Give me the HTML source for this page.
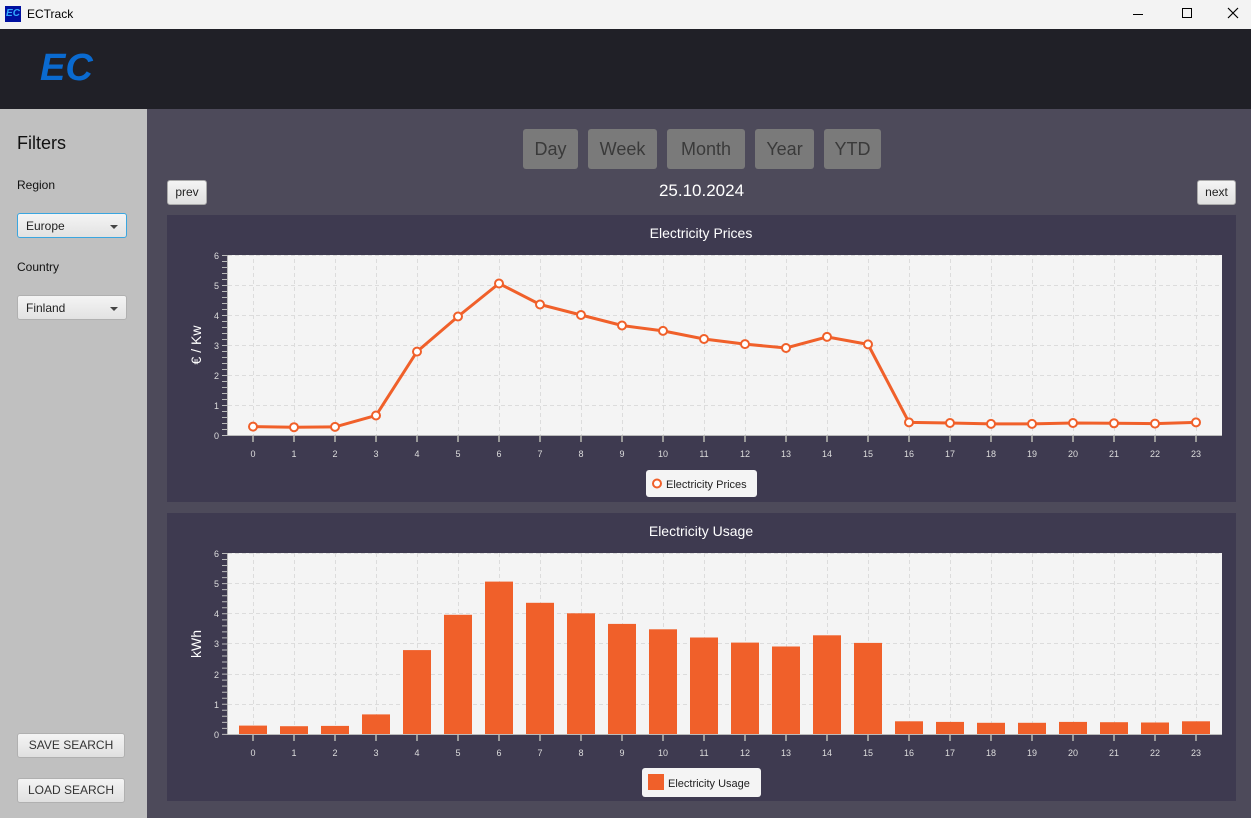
<!DOCTYPE html>
<html><head><meta charset="utf-8"><style>
*{margin:0;padding:0;box-sizing:border-box}
body{width:1251px;height:818px;overflow:hidden;position:relative;font-family:"Liberation Sans","DejaVu Sans",sans-serif;background:#4d4a5a}
.a{position:absolute}
.tb{left:0;top:0;width:1251px;height:29px;background:#f3f3f3}
.hd{left:0;top:29px;width:1251px;height:80px;background:#202027}
.sb{left:0;top:109px;width:147px;height:709px;background:#c0c0c0}
.sel{width:110px;height:25px;border-radius:3px;background:linear-gradient(#f4f4f4,#e2e2e2);border:1px solid #b0b0b0;font-size:12px;color:#222;padding:5px 8px}
.sel:after{content:"";position:absolute;right:8px;top:11px;border:4px solid transparent;border-top:4px solid #444;border-bottom:0}
.btn{width:108px;height:25px;background:linear-gradient(#f4f4f4,#e0e0e0);border:1px solid #b0b0b0;border-radius:3px;font-size:12px;color:#333;text-align:center;line-height:23px}
.tab{top:129px;height:40px;background:#7a7a7a;border-radius:3px;color:#3a3a3a;font-size:18px;text-align:center;line-height:40px}
.sm{height:25px;background:linear-gradient(#f4f4f4,#e0e0e0);border:1px solid #aaa;border-radius:3px;font-size:12px;color:#222;text-align:center;line-height:23px}
.pn{background:#3e3a50;left:167px;width:1069px}
</style></head><body>
<div class="a tb"></div>
<div class="a" style="left:5px;top:6px;width:16px;height:16px;background:#0010a0;color:#3af;font:bold italic 10px 'Liberation Sans';line-height:16px;text-align:center">EC</div>
<div class="a" style="left:27px;top:7px;font-size:12px;color:#000">ECTrack</div>
<div class="a" style="left:1133px;top:14px;width:10px;height:1px;background:#000"></div>
<div class="a" style="left:1182px;top:8px;width:10px;height:10px;border:1px solid #000"></div>
<svg class="a" style="left:1227px;top:7px" width="12" height="12"><path d="M1 1L11 11M11 1L1 11" stroke="#000" stroke-width="1.2"/></svg>
<div class="a hd"></div>
<div class="a" style="left:40px;top:47px;color:#0a6ad0;font:bold italic 38px 'Liberation Sans'">EC</div>
<div class="a sb"></div>
<div class="a" style="left:17px;top:133px;font-size:18px;color:#111">Filters</div>
<div class="a" style="left:17px;top:178px;font-size:12px;color:#111">Region</div>
<div class="a sel" style="left:17px;top:213px;border:1px solid #3aa6e0">Europe</div>
<div class="a" style="left:17px;top:260px;font-size:12px;color:#111">Country</div>
<div class="a sel" style="left:17px;top:295px">Finland</div>
<div class="a btn" style="left:17px;top:733px">SAVE SEARCH</div>
<div class="a btn" style="left:17px;top:778px">LOAD SEARCH</div>
<div class="a tab" style="left:523px;width:55px">Day</div>
<div class="a tab" style="left:588px;width:69px">Week</div>
<div class="a tab" style="left:667px;width:78px">Month</div>
<div class="a tab" style="left:755px;width:59px">Year</div>
<div class="a tab" style="left:824px;width:57px">YTD</div>
<div class="a sm" style="left:167px;top:180px;width:40px">prev</div>
<div class="a sm" style="left:1197px;top:180px;width:39px">next</div>
<div class="a" style="left:0;width:1403px;top:181px;text-align:center;font-size:17px;color:#fff">25.10.2024</div>
<div class="a pn" style="top:215px;height:287px"></div>
<div class="a pn" style="top:513px;height:288px"></div>
<svg class="a" style="left:0;top:0" width="1251" height="818" font-family="Liberation Sans, DejaVu Sans, sans-serif">
<defs>
<pattern id="vg" x="253" y="0" width="41" height="818" patternUnits="userSpaceOnUse"><line x1="0.5" y1="0" x2="0.5" y2="818" stroke="#dcdcdc" stroke-dasharray="4 3"/></pattern>
</defs>
<text x="701" y="238" fill="#fff" font-size="14" text-anchor="middle">Electricity Prices</text>
<rect x="228" y="255" width="994" height="180" fill="#f4f4f4"/>
<rect x="228" y="255" width="994" height="180" fill="url(#vg)"/>
<g stroke="#dcdcdc" stroke-dasharray="4 3"><line x1="228" x2="1222" y1="255.5" y2="255.5"/><line x1="228" x2="1222" y1="285.5" y2="285.5"/><line x1="228" x2="1222" y1="315.5" y2="315.5"/><line x1="228" x2="1222" y1="345.5" y2="345.5"/><line x1="228" x2="1222" y1="375.5" y2="375.5"/><line x1="228" x2="1222" y1="405.5" y2="405.5"/></g>
<line x1="227.5" x2="227.5" y1="255" y2="436" stroke="#bbb"/>
<line x1="224.5" x2="224.5" y1="255" y2="436" stroke="#bbb" stroke-width="5" stroke-dasharray="1 5"/>
<line x1="228" x2="1222" y1="435.5" y2="435.5" stroke="#bbb"/>
<g fill="#ddd" font-size="9" text-anchor="end"><text x="219" y="259">6</text><text x="219" y="289">5</text><text x="219" y="319">4</text><text x="219" y="349">3</text><text x="219" y="379">2</text><text x="219" y="409">1</text><text x="219" y="439">0</text></g>
<text transform="translate(201 345) rotate(-90)" fill="#fff" font-size="14" text-anchor="middle">€ / Kw</text>
<line x1="252" x2="1222" y1="439" y2="439" stroke="#999" stroke-width="6" stroke-dasharray="2 39"/>
<g fill="#ddd" font-size="9" text-anchor="middle">
<text x="253" y="457">0</text><text x="294" y="457">1</text><text x="335" y="457">2</text><text x="376" y="457">3</text><text x="417" y="457">4</text><text x="458" y="457">5</text><text x="499" y="457">6</text><text x="540" y="457">7</text><text x="581" y="457">8</text><text x="622" y="457">9</text><text x="663" y="457">10</text><text x="704" y="457">11</text><text x="745" y="457">12</text><text x="786" y="457">13</text><text x="827" y="457">14</text><text x="868" y="457">15</text><text x="909" y="457">16</text><text x="950" y="457">17</text><text x="991" y="457">18</text><text x="1032" y="457">19</text><text x="1073" y="457">20</text><text x="1114" y="457">21</text><text x="1155" y="457">22</text><text x="1196" y="457">23</text></g>
<polyline fill="none" stroke="#f0602a" stroke-width="3" points="253,426.6 294,427.2 335,426.9 376,415.5 417,351.6 458,316.5 499,283.5 540,304.5 581,315 622,325.5 663,330.9 704,339 745,344.1 786,348 827,336.9 868,344.4 909,422.4 950,423 991,423.9 1032,423.9 1073,423 1114,423.3 1155,423.6 1196,422.4"/>
<g fill="#fff" stroke="#f0602a" stroke-width="2">
<circle cx="253" cy="426.6" r="4"/><circle cx="294" cy="427.2" r="4"/><circle cx="335" cy="426.9" r="4"/><circle cx="376" cy="415.5" r="4"/><circle cx="417" cy="351.6" r="4"/><circle cx="458" cy="316.5" r="4"/><circle cx="499" cy="283.5" r="4"/><circle cx="540" cy="304.5" r="4"/><circle cx="581" cy="315" r="4"/><circle cx="622" cy="325.5" r="4"/><circle cx="663" cy="330.9" r="4"/><circle cx="704" cy="339" r="4"/><circle cx="745" cy="344.1" r="4"/><circle cx="786" cy="348" r="4"/><circle cx="827" cy="336.9" r="4"/><circle cx="868" cy="344.4" r="4"/><circle cx="909" cy="422.4" r="4"/><circle cx="950" cy="423" r="4"/><circle cx="991" cy="423.9" r="4"/><circle cx="1032" cy="423.9" r="4"/><circle cx="1073" cy="423" r="4"/><circle cx="1114" cy="423.3" r="4"/><circle cx="1155" cy="423.6" r="4"/><circle cx="1196" cy="422.4" r="4"/></g>
<rect x="646" y="470" width="111" height="27" rx="3" fill="#f4f4f4"/>
<circle cx="657" cy="483.5" r="4" fill="#fff" stroke="#f0602a" stroke-width="2"/>
<text x="666" y="488" font-size="11" fill="#222">Electricity Prices</text>

<text x="701" y="536" fill="#fff" font-size="14" text-anchor="middle">Electricity Usage</text>
<rect x="228" y="553" width="994" height="181" fill="#f4f4f4"/>
<rect x="228" y="553" width="994" height="181" fill="url(#vg)"/>
<g stroke="#dcdcdc" stroke-dasharray="4 3"><line x1="228" x2="1222" y1="553.5" y2="553.5"/><line x1="228" x2="1222" y1="583.5" y2="583.5"/><line x1="228" x2="1222" y1="613.5" y2="613.5"/><line x1="228" x2="1222" y1="643.5" y2="643.5"/><line x1="228" x2="1222" y1="674.5" y2="674.5"/><line x1="228" x2="1222" y1="704.5" y2="704.5"/></g>
<g fill="#f0602a">
<rect x="239" y="725.6" width="28" height="8.4"/><rect x="280" y="726.2" width="28" height="7.8"/><rect x="321" y="725.9" width="28" height="8.1"/><rect x="362" y="714.4" width="28" height="19.6"/><rect x="403" y="650.1" width="28" height="83.9"/><rect x="444" y="614.8" width="28" height="119.2"/><rect x="485" y="581.6" width="28" height="152.4"/><rect x="526" y="602.8" width="28" height="131.2"/><rect x="567" y="613.3" width="28" height="120.7"/><rect x="608" y="623.9" width="28" height="110.1"/><rect x="649" y="629.3" width="28" height="104.7"/><rect x="690" y="637.5" width="28" height="96.5"/><rect x="731" y="642.6" width="28" height="91.4"/><rect x="772" y="646.5" width="28" height="87.5"/><rect x="813" y="635.3" width="28" height="98.7"/><rect x="854" y="642.9" width="28" height="91.1"/><rect x="895" y="721.3" width="28" height="12.7"/><rect x="936" y="721.9" width="28" height="12.1"/><rect x="977" y="722.8" width="28" height="11.2"/><rect x="1018" y="722.8" width="28" height="11.2"/><rect x="1059" y="721.9" width="28" height="12.1"/><rect x="1100" y="722.2" width="28" height="11.8"/><rect x="1141" y="722.5" width="28" height="11.5"/><rect x="1182" y="721.3" width="28" height="12.7"/></g>
<line x1="227.5" x2="227.5" y1="553" y2="735" stroke="#bbb"/>
<line x1="224.5" x2="224.5" y1="553" y2="735" stroke="#bbb" stroke-width="5" stroke-dasharray="1 5.03"/>
<line x1="228" x2="1222" y1="734.5" y2="734.5" stroke="#bbb"/>
<g fill="#ddd" font-size="9" text-anchor="end"><text x="219" y="557">6</text><text x="219" y="587">5</text><text x="219" y="617">4</text><text x="219" y="647">3</text><text x="219" y="678">2</text><text x="219" y="708">1</text><text x="219" y="738">0</text></g>
<text transform="translate(201 644) rotate(-90)" fill="#fff" font-size="14" text-anchor="middle">kWh</text>
<line x1="252" x2="1222" y1="738" y2="738" stroke="#999" stroke-width="6" stroke-dasharray="2 39"/>
<g fill="#ddd" font-size="9" text-anchor="middle">
<text x="253" y="756">0</text><text x="294" y="756">1</text><text x="335" y="756">2</text><text x="376" y="756">3</text><text x="417" y="756">4</text><text x="458" y="756">5</text><text x="499" y="756">6</text><text x="540" y="756">7</text><text x="581" y="756">8</text><text x="622" y="756">9</text><text x="663" y="756">10</text><text x="704" y="756">11</text><text x="745" y="756">12</text><text x="786" y="756">13</text><text x="827" y="756">14</text><text x="868" y="756">15</text><text x="909" y="756">16</text><text x="950" y="756">17</text><text x="991" y="756">18</text><text x="1032" y="756">19</text><text x="1073" y="756">20</text><text x="1114" y="756">21</text><text x="1155" y="756">22</text><text x="1196" y="756">23</text></g>
<rect x="642" y="768" width="119" height="29" rx="3" fill="#f4f4f4"/>
<rect x="648" y="774" width="16" height="16" fill="#f0602a"/>
<text x="668" y="787" font-size="11" fill="#222">Electricity Usage</text>
</svg>
</body></html>
